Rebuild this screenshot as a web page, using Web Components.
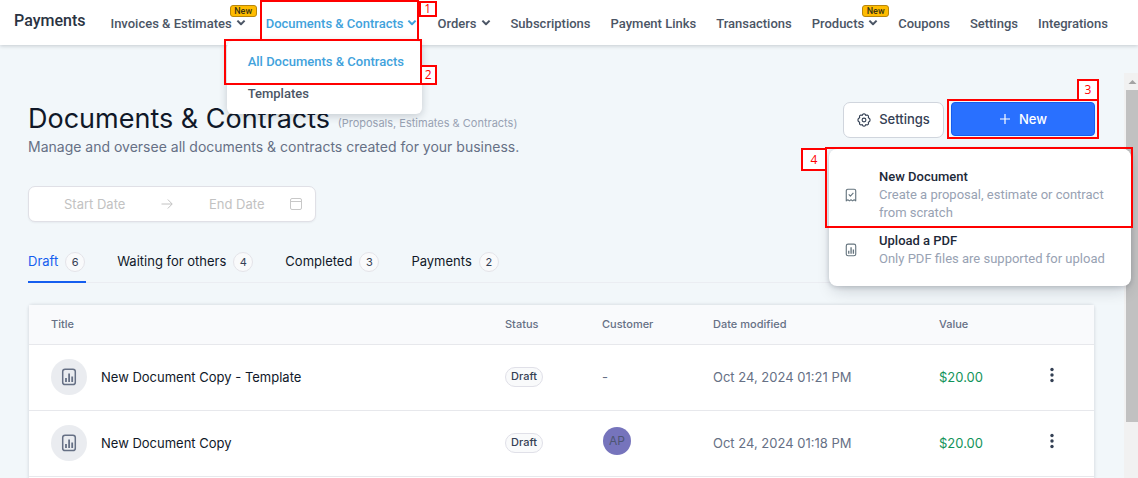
<!DOCTYPE html>
<html lang="en">
<head>
<meta charset="utf-8">
<meta name="viewport" content="width=device-width, initial-scale=1">
<title>Payments - Documents &amp; Contracts</title>
<style>
  body { margin: 0; background: #f2f7fa; font-family: Inter, "Liberation Sans", sans-serif; color: #101828; }
</style>
</head>
<body>
<payments-app></payments-app>

<script>
const icons = {
  chevron: '<svg width="10" height="8" viewBox="0 0 10 8" fill="none" stroke="currentColor" stroke-width="2" stroke-linejoin="round"><path d="M1.4 1.6 5 5.2 8.6 1.6"/></svg>',
  chart: '<svg width="100%" height="100%" viewBox="0 0 16 18" fill="none" stroke="currentColor" stroke-width="1.5"><rect x="1.7" y="1.2" width="12.6" height="15.4" rx="2.4"/><path d="M5 14v-4M8.1 14V5.4M11.2 14V8.4" stroke-width="1.8"/></svg>',
  receipt: '<svg width="100%" height="100%" viewBox="0 0 16 18" fill="none" stroke="currentColor" stroke-width="1.5" stroke-linejoin="round"><path d="M1.7 16.8V3.4a2 2 0 0 1 2-2h8.6a2 2 0 0 1 2 2v13.4l-2.1-1.5-2.1 1.5L8 15.3l-2.1 1.5-2.1-1.5z"/><path d="m5 8.2 2.2 2.2 4-4.2"/></svg>',
  gear: '<svg width="14" height="14" viewBox="0 0 14 14" fill="none" stroke="currentColor" stroke-width="1.1" stroke-linejoin="round"><path d="M5.8 1.2 7 .7l1.2.5.5 1.2 1.3-.5 1.3.8.2 1.2-.2.9 1.3.7.5 1.5-.5 1.5-1.3.7.2.9-.2 1.2-1.3.8-1.3-.5-.5 1.2-1.2.5-1.2-.5-.5-1.2-1.3.5-1.3-.8-.2-1.2.2-.9-1.3-.7L.9 7l.5-1.5 1.3-.7-.2-.9.2-1.2L4 1.9l1.3.5z"/><circle cx="7" cy="7" r="1.9"/></svg>',
  plus: '<svg width="12" height="12" viewBox="0 0 12 12" stroke="currentColor" stroke-width="1.2"><path d="M6 1v10M1 6h10"/></svg>',
  arrow: '<svg width="12" height="12" viewBox="0 0 12 12" fill="none" stroke="currentColor"><path d="M.5 6h10.6M6.8 1.5 11.2 6l-4.4 4.5"/></svg>',
  calendar: '<svg width="14" height="14" viewBox="0 0 14 14" fill="none" stroke="#c8c8c8"><rect x="1.5" y="1.5" width="11" height="11" rx="1.5"/><path d="M1.5 4.5h11"/></svg>',
  kebab: '<svg width="4" height="16" viewBox="0 0 4 16" fill="currentColor"><circle cx="2" cy="2.5" r="1.7"/><circle cx="2" cy="8" r="1.7"/><circle cx="2" cy="13.5" r="1.7"/></svg>'
};

function define(name, render) {
  customElements.define(name, class extends HTMLElement {
    connectedCallback() {
      if (this.shadowRoot) return;
      const t = document.createElement('template');
      t.innerHTML = render(this);
      this.attachShadow({ mode: 'open' }).append(t.content.cloneNode(true));
    }
  });
}

/* Red outline with a numbered tag, laid over the element that holds it */
define('step-frame', el => `
  <style>
    :host { position: absolute; box-sizing: border-box; border: 2px solid #ff0000; pointer-events: none; z-index: 3; }
    span { position: absolute; box-sizing: border-box; display: grid; place-items: center; background: #fff;
      border: 2px solid #ff0000; color: #ff0000; font: 12px/12px "Open Sans", sans-serif;
      width: var(--tag-width, 18px); height: var(--tag-height, 20px);
      top: var(--tag-top, auto); left: var(--tag-left, auto); right: var(--tag-right, auto); }
  </style><span>${el.getAttribute('number')}</span>`);

define('nav-item', el => `
  <style>
    :host { position: relative; display: flex; align-items: center; gap: 4px; color: #4b5565;
      font: 500 13px/20px Roboto, sans-serif; white-space: nowrap; }
    :host([active]) { color: #41a2dc; }
    a { color: inherit; text-decoration: none; padding-top: 2px; }
    .badge { position: absolute; top: 5px; right: -11px; box-sizing: border-box; width: 27px; height: 12px;
      border: 1px solid #b8860b; border-radius: 3px; background: #ffbc00; color: #3a3413;
      font: 500 9px/10px Roboto, sans-serif; text-align: center; }
  </style>
  <a href="#"><slot></slot></a>
  ${el.hasAttribute('caret') ? icons.chevron : ''}
  ${el.hasAttribute('badge') ? `<span class="badge">${el.getAttribute('badge')}</span>` : ''}
  <slot name="overlay"></slot>`);

define('nav-menu', () => `
  <style>
    :host { position: absolute; top: 41px; left: -39px; box-sizing: border-box; width: 195px; background: #fff;
      border-radius: 6px; box-shadow: 0 2px 8px rgba(16,24,40,.2); z-index: 2; font: 500 13px/20px Roboto, sans-serif; }
    div { position: relative; padding: 11px 21px 10px; }
    div + div { padding-top: 2px; }
    a { color: #4b5565; text-decoration: none; }
    a.on { color: #41a2dc; }
    step-frame { inset: -2px 0 -3px -3px; --tag-top: 24px; --tag-left: 194px; --tag-width: 17px; }
  </style>
  <div><a class="on" href="#">All Documents &amp; Contracts</a><step-frame number="2"></step-frame></div>
  <div><a href="#">Templates</a></div>`);

define('top-bar', () => `
  <style>
    :host { position: relative; z-index: 2; display: flex; height: 45px; padding-left: 14px; background: #fff;
      box-shadow: 0 1px 4px rgba(16,24,40,.2); }
    h1 { margin: 0 25px 0 0; font: 500 16px/42px Roboto, sans-serif; color: #2a3342; }
    nav { display: flex; gap: 20px; }
    step-frame { inset: 0 -2px 4px -6px; --tag-top: -1px; --tag-left: 157px; --tag-height: 16px; }
  </style>
  <h1>Payments</h1>
  <nav>
    <nav-item caret badge="New">Invoices &amp; Estimates</nav-item>
    <nav-item caret active>Documents &amp; Contracts
      <step-frame slot="overlay" number="1"></step-frame>
      <nav-menu slot="overlay"></nav-menu>
    </nav-item>
    <nav-item caret>Orders</nav-item>
    <nav-item>Subscriptions</nav-item>
    <nav-item>Payment Links</nav-item>
    <nav-item>Transactions</nav-item>
    <nav-item caret badge="New">Products</nav-item>
    <nav-item>Coupons</nav-item>
    <nav-item>Settings</nav-item>
    <nav-item>Integrations</nav-item>
  </nav>`);

define('menu-entry', el => `
  <style>
    :host { position: relative; display: block; }
    button { all: unset; box-sizing: border-box; width: 100%; display: flex; align-items: center; gap: 22px;
      padding: 5px 16px; font: 13px/18px Roboto, sans-serif; cursor: pointer; }
    :host(:first-of-type) button { padding-top: 19px; }
    :host(:last-of-type) button { padding-bottom: 18px; }
    i { flex: none; width: 12px; height: 14px; display: flex; color: #66757f; }
    b { display: block; font-weight: 500; color: #1d2939; }
    span { color: #98a2b3; }
  </style>
  <button type="button"><i>${icons[el.getAttribute('icon')]}</i><span><b>${el.getAttribute('heading')}</b><slot></slot></span></button>
  <slot name="overlay"></slot>`);

define('page-actions', () => `
  <style>
    :host { position: relative; display: flex; align-items: flex-start; gap: 7px; flex: none; }
    button { box-sizing: border-box; display: flex; align-items: center; justify-content: center; gap: 8px;
      border-radius: 7px; font: 500 13px/20px Inter, sans-serif; }
    .settings { width: 101px; height: 36px; padding: 0 0 3px; background: #fff; border: 1px solid #d0d5dd; color: #344054; }
    .settings svg { margin-top: 3px; }
    .new { width: 144px; height: 34px; padding: 0; background: #2970ff; border: 1px solid #155eef; border-radius: 4px; color: #fff; }
    .wrap { position: relative; }
    .menu { position: absolute; top: 47px; right: -36px; width: 302px; background: #fff; border-radius: 8px;
      box-shadow: 0 8px 16px -4px rgba(16,24,40,.18), 0 1px 5px rgba(16,24,40,.2); z-index: 1; }
    .wrap > step-frame { inset: -3px -4px; --tag-top: -22px; --tag-right: -2px; --tag-width: 22px; --tag-height: 22px; }
    menu-entry step-frame { inset: -2px -2px -1px -4px; --tag-top: -1px; --tag-left: -26px; --tag-width: 26px; --tag-height: 23px; }
  </style>
  <button class="settings" type="button">${icons.gear}Settings</button>
  <div class="wrap">
    <button class="new" type="button">${icons.plus}New</button>
    <step-frame number="3"></step-frame>
    <div class="menu">
      <menu-entry icon="receipt" heading="New Document">Create a proposal, estimate or contract from scratch
        <step-frame slot="overlay" number="4"></step-frame></menu-entry>
      <menu-entry icon="chart" heading="Upload a PDF">Only PDF files are supported for upload</menu-entry>
    </div>
  </div>`);

define('page-heading', () => `
  <style>
    :host { display: flex; justify-content: space-between; }
    h2 { margin: 0; font: 400 27px/34px Inter, sans-serif; color: #101828; }
    small { font: 11px/16px Inter, sans-serif; color: #98a2b3; vertical-align: 1px; }
    p { margin: 0; font-size: 14px; line-height: 22px; color: #667085; }
  </style>
  <div>
    <h2>Documents &amp; Contracts <small>(Proposals, Estimates &amp; Contracts)</small></h2>
    <p>Manage and oversee all documents &amp; contracts created for your business.</p>
  </div>
  <page-actions></page-actions>`);

define('date-range', () => `
  <style>
    :host { display: flex; align-items: center; box-sizing: border-box; width: 288px; height: 36px; padding: 0 12px 0 35px;
      background: #fff; border: 1px solid #e0e0e6; border-radius: 7px; color: #c2c2c2; box-shadow: 0 1px 2px rgba(16,24,40,.05); }
    input { box-sizing: border-box; width: 97px; min-width: 0; padding: 0; border: 0; background: none; outline: none;
      font: 13px/20px Inter, sans-serif; color: #344054; }
    input::placeholder { color: #c2c2c2; opacity: 1; }
    input + svg { flex: none; margin-right: 36px; }
    input.end { width: 80px; }
    input.end + svg { margin: 0; }
  </style>
  <input aria-label="Start Date" placeholder="Start Date">${icons.arrow}
  <input class="end" aria-label="End Date" placeholder="End Date">${icons.calendar}`);

define('tab-link', el => `
  <style>
    :host { display: block; }
    a { display: flex; align-items: center; gap: 7px; height: 42px; box-sizing: border-box; padding-right: 1px; color: #101828;
      text-decoration: none; font-size: 13px; line-height: 20px; border-bottom: 2px solid transparent; }
    :host([active]) a { color: #155eef; border-color: #155eef; }
    span { box-sizing: border-box; width: 20px; height: 20px; margin-top: 2px; border: 1px solid #e4e4e9; border-radius: 10px;
      background: #f9fafb; color: #344054; font-size: 11px; line-height: 18px; text-align: center; }
  </style>
  <a href="#"><slot></slot><span>${el.getAttribute('count')}</span></a>`);

define('tab-strip', () => `
  <style>
    :host { display: flex; gap: 31px; box-shadow: inset 0 -1px #ebedf2; }
  </style><slot></slot>`);

const rows = [
  { title: 'New Document Copy - Template', customer: '-', date: 'Oct 24, 2024 01:21 PM', value: '$20.00' },
  { title: 'New Document Copy', customer: '<span class="avatar">AP</span>', date: 'Oct 24, 2024 01:18 PM', value: '$20.00' }
];

define('document-table', () => `
  <style>
    :host { display: block; background: #fff; border-radius: 4px 4px 0 0; box-shadow: 0 0 3px 1px rgba(16,24,40,.1); }
    table { width: 100%; table-layout: fixed; border-collapse: separate; border-spacing: 0; }
    th, td { box-sizing: border-box; padding: 0 0 2px; text-align: left; border-bottom: 1px solid #e7e8ec; font-size: 13px; line-height: 20px; color: #667085; }
    th { height: 40px; background: #f9fafc; font-size: 11px; font-weight: 500; }
    td { height: 66px; }
    th:first-child, td:first-child { padding-left: 22px; }
    .status { width: 97px; } .customer { width: 111px; } .date { width: 226px; } .value { width: 110px; } .more { width: 45px; }
    .name { display: flex; align-items: center; gap: 14px; color: #101828; }
    .name i { width: 36px; height: 36px; border-radius: 18px; background: #eaecf0; color: #667085; display: grid; place-items: center; }
    .name i b { width: 16px; height: 18px; display: flex; }
    .pill { display: inline-block; box-sizing: border-box; width: 38px; height: 20px; border: 1px solid #e0e0e8; border-radius: 10px;
      background: #f9fafb; color: #344054; font-size: 11px; font-weight: 500; line-height: 17px; text-align: center; vertical-align: middle; }
    .avatar { display: block; width: 28px; height: 28px; margin: 0 0 4px 1px; border-radius: 14px; background: #7674bc; color: #4d5673;
      font-size: 12px; line-height: 28px; text-align: center; }
    td.money { color: #12935a; }
    button { display: flex; width: 4px; height: 16px; margin: 0 0 4px 1px; padding: 0; border: 0; background: none; color: #344054; }
  </style>
  <table>
    <thead><tr><th>Title</th><th class="status">Status</th><th class="customer">Customer</th><th class="date">Date modified</th><th class="value">Value</th><th class="more"></th></tr></thead>
    <tbody>${rows.map(r => `<tr>
      <td><div class="name"><i><b>${icons.chart}</b></i>${r.title}</div></td>
      <td><span class="pill">Draft</span></td><td>${r.customer}</td><td>${r.date}</td>
      <td class="money">${r.value}</td><td><button type="button" aria-label="More actions">${icons.kebab}</button></td></tr>`).join('')}
    </tbody>
  </table>`);

define('scroll-rail', () => `
  <style>
    :host { display: flex; flex-direction: column; width: 14px; flex: none; background: #f1f1f1; }
    svg { flex: none; }
    div { height: 82%; margin-left: 2px; background: #c1c1c1; }
  </style>
  <svg width="14" height="17" viewBox="0 0 14 17"><path d="M4.5 11 8.5 7l4 4z" fill="#a3a3a3"/></svg><div></div>`);

define('payments-app', () => `
  <style>
    :host { display: flex; flex-direction: column; height: 100vh; overflow: hidden; }
    .body { flex: 1; min-height: 0; display: flex; margin-top: 28px; }
    main { flex: 1; min-width: 0; display: flex; flex-direction: column; padding: 29px 29px 0 28px; }
    date-range { margin-top: 28px; }
    tab-strip { margin-top: 19px; }
    document-table { flex: 1 0 auto; margin: 22px 1px 0; }
  </style>
  <top-bar></top-bar>
  <div class="body">
    <main>
      <page-heading></page-heading>
      <date-range></date-range>
      <tab-strip>
        <tab-link active count="6">Draft</tab-link>
        <tab-link count="4">Waiting for others</tab-link>
        <tab-link count="3">Completed</tab-link>
        <tab-link count="2">Payments</tab-link>
      </tab-strip>
      <document-table></document-table>
    </main>
    <scroll-rail></scroll-rail>
  </div>`);
</script>
</body>
</html>
